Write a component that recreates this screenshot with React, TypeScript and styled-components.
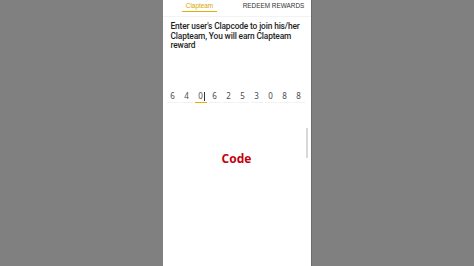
import React, { FC } from "react";
import styled, { createGlobalStyle } from "styled-components";

const GlobalStyle = createGlobalStyle`
  html, body {
    margin: 0;
    padding: 0;
    background: #808080;
    font-family: "Liberation Sans", Arial, sans-serif;
  }
`;

const Page = styled.div`
  display: flex;
  justify-content: center;
  width: 474px;
  height: 266px;
  background: #808080;
  overflow: hidden;
`;

const Screen = styled.div`
  position: relative;
  width: 148px;
  height: 266px;
  background: #ffffff;
  border-right: 1px solid #6c6c6c;
  display: flex;
  flex-direction: column;
`;

const TabBar = styled.div`
  display: grid;
  grid-template-columns: 74px 74px;
  height: 16px;
  border-bottom: 1px solid #f3f3f3;
`;

const Tab = styled.div<{ $active?: boolean }>`
  justify-self: center;
  height: 12px;
  padding: 2px 4px 0;
  box-sizing: border-box;
  font-size: 6.4px;
  line-height: 8px;
  color: ${(p) => (p.$active ? "#d9a400" : "#333333")};
  border-bottom: ${(p) => (p.$active ? "1.5px solid #e3b000" : "none")};
  white-space: nowrap;
`;

const Message = styled.p`
  margin: 5px 0 0;
  padding: 0 6px 0 8px;
  font-family: Roboto, "Liberation Sans", sans-serif;
  font-weight: 500;
  font-size: 8.4px;
  letter-spacing: -0.15px;
  line-height: 9.5px;
  color: #1e1e1e;
`;

const CodeRow = styled.div`
  display: flex;
  gap: 2px;
  padding-left: 4px;
  margin-top: 40px;
`;

const Cell = styled.div<{ $active?: boolean }>`
  position: relative;
  width: 12px;
  height: 12px;
  box-sizing: border-box;
  text-align: center;
  font-family: "Noto Sans", sans-serif;
  font-size: 8px;
  line-height: 10px;
  color: #4a4a4a;
  border-bottom: 1px solid ${(p) => (p.$active ? "#e3b000" : "#f1f1f1")};
`;

const Caret = styled.span`
  position: absolute;
  left: 9px;
  top: 1px;
  width: 1px;
  height: 9px;
  background: #333333;
`;

const Label = styled.div`
  margin-top: 47px;
  text-align: center;
  font-family: "Open Sans", "Liberation Sans", sans-serif;
  font-weight: 700;
  font-size: 12px;
  color: #c4000c;
`;

const Scrollbar = styled.div`
  position: absolute;
  right: 3px;
  top: 128px;
  width: 1.5px;
  height: 30px;
  background: #d8d8d8;
`;

const digits = ["6", "4", "0", "6", "2", "5", "3", "0", "8", "8"];

const App: FC = () => {
  return (
    <>
      <GlobalStyle />
      <Page>
        <Screen>
          <TabBar>
            <Tab $active>Clapteam</Tab>
            <Tab>REDEEM REWARDS</Tab>
          </TabBar>
          <Message>
            Enter user's Clapcode to join his/her
            <br />
            Clapteam, You will earn Clapteam
            <br />
            reward
          </Message>
          <CodeRow>
            {digits.map((d, i) => (
              <Cell key={i} $active={i === 2}>
                {d}
                {i === 2 && <Caret />}
              </Cell>
            ))}
          </CodeRow>
          <Label>Code</Label>
          <Scrollbar />
        </Screen>
      </Page>
    </>
  );
};

export default App;
